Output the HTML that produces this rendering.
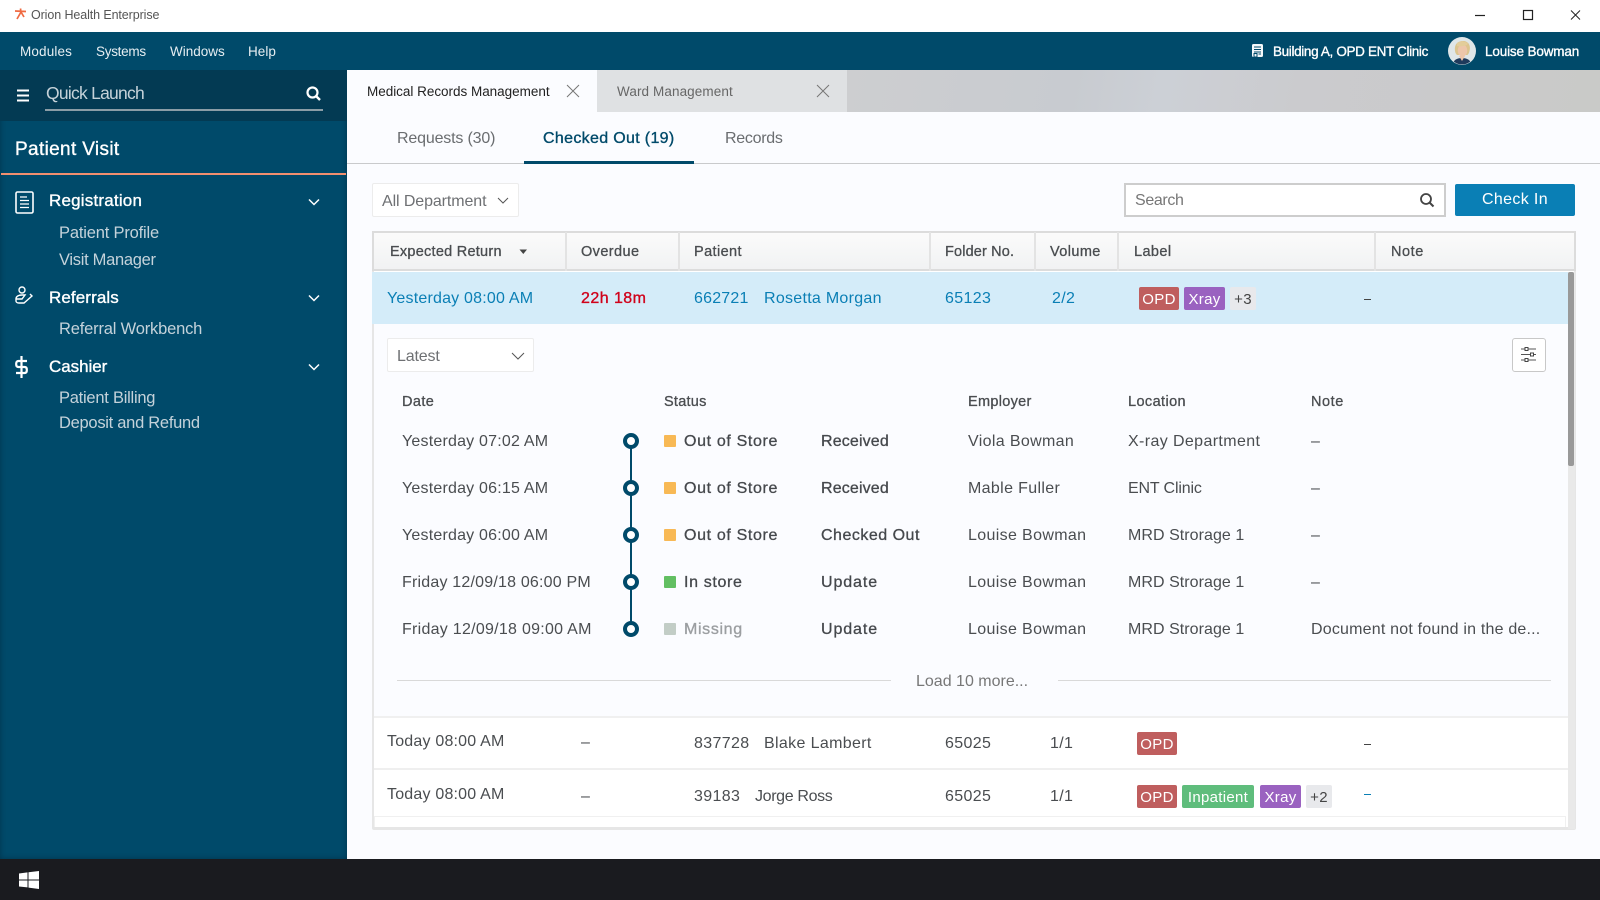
<!DOCTYPE html>
<html lang="en"><head><meta charset="utf-8"><title>Orion Health Enterprise</title>
<style>
*{box-sizing:border-box}
html,body{margin:0;padding:0;width:1600px;height:900px;overflow:hidden;background:#fbfcff;font-family:"Liberation Sans",sans-serif;color:#444}
.a{position:absolute}
.t{position:absolute;white-space:nowrap;line-height:20px;transform:translateY(calc(-50% + 2px));font-size:16px;letter-spacing:.2px;color:#4a4d50}
.s{-webkit-text-stroke:.35px currentColor}
.w{color:#fff}
.h{font-size:14.5px;letter-spacing:.4px;color:#4a4d50;-webkit-text-stroke:.3px #4a4d50}
.b{color:#0a7fb5}
.dk{color:#45484c;-webkit-text-stroke:.3px #45484c;letter-spacing:.65px}
.tag{position:absolute;height:23px;line-height:25px;border-radius:2px;color:#fff;font-size:15px;text-align:center;letter-spacing:.3px}
.sq{position:absolute;width:12px;height:12px;border-radius:1px;left:664px}
.dot{position:absolute;left:623px;width:16px;height:16px;border-radius:50%;border:4px solid #004a6a;background:#fff}
.sep{position:absolute;top:232px;height:39px;width:2px;background:#e3e3e3}
.sub{color:#c4d2da;font-size:16.5px;letter-spacing:-.18px}
.n{font-size:13.5px;color:#e6eef2}
</style></head><body>

<!-- title bar -->
<div class="a" style="left:0;top:0;width:1600px;height:32px;background:#fff"></div>
<svg class="a" style="left:14px;top:8px" width="14" height="12" viewBox="0 0 14 12"><path d="M6.500 0.500 L7 5 M1 3 L12 3.500 M7 4 L3 11 M7 4 L10 9" stroke="#ef6a42" stroke-width="1.700" fill="none"/></svg>
<div class="t" style="left:31px;top:13px;font-size:12.500px;letter-spacing:-.1px;color:#555">Orion Health Enterprise</div>
<svg class="a" style="left:1470px;top:5px" width="120" height="22" viewBox="0 0 120 22"><path d="M5 10.500H15" stroke="#222" stroke-width="1.200"/><rect x="53.500" y="5.500" width="9" height="9" fill="none" stroke="#222" stroke-width="1.200"/><path d="M101 5.500l9 9M110 5.500l-9 9" stroke="#222" stroke-width="1"/></svg>

<!-- nav -->
<div class="a" style="left:0;top:32px;width:1600px;height:38px;background:#004a6a"></div>
<div class="t n" style="left:20px;top:50px;letter-spacing:.15px">Modules</div>
<div class="t n" style="left:96px;top:50px;letter-spacing:-.28px">Systems</div>
<div class="t n" style="left:170px;top:50px;letter-spacing:0">Windows</div>
<div class="t n" style="left:248px;top:50px;letter-spacing:.05px">Help</div>
<svg class="a" style="left:1251px;top:43px" width="13" height="15" viewBox="0 0 13 15"><rect x="1" y="1" width="11" height="13" rx="1.500" fill="#f4f8fa"/><path d="M3 4H10M3 6.500H10M3 9H10M7.500 11H10M3 10.500H6V14H3z" stroke="#004a6a" stroke-width="1" fill="none"/></svg>
<div class="t s w" style="left:1273px;top:50px;font-size:13.500px;letter-spacing:-.35px">Building A, OPD ENT Clinic</div>
<svg class="a" style="left:1448px;top:37px" width="28" height="28" viewBox="0 0 28 28"><defs><clipPath id="c"><circle cx="14" cy="14" r="13.500"/></clipPath></defs><circle cx="14" cy="14" r="14" fill="#dfe6e8"/><g clip-path="url(#c)"><path d="M7 14C6 7 10 4 15 4s8 4 6.500 10c-.5 2-1 3-2 4H9C8 17 7.300 16 7 14z" fill="#dcc48e"/><ellipse cx="14.500" cy="13.500" rx="4.800" ry="6" fill="#edc6aa"/><path d="M9 9c3 1 7 0 10-1l1-2-6-2-5 2z" fill="#e3cd9a"/><path d="M5 28c0-5 4-7 9-7s9 2 9 7z" fill="#1f3a5c"/><path d="M11 19l3 5 3-5z" fill="#edc6aa"/></g></svg>
<div class="t s w" style="left:1485px;top:50px;font-size:13.500px;letter-spacing:-.15px">Louise Bowman</div>

<!-- sidebar -->
<div class="a" style="left:0;top:70px;width:347px;height:789px;background:#004a6a;box-shadow:inset 0 0 6px rgba(0,20,35,.4)"></div>
<div class="a" style="left:0;top:70px;width:347px;height:51px;background:#033a53"></div>
<svg class="a" style="left:16px;top:89px" width="14" height="13" viewBox="0 0 14 13"><path d="M1 1.500H13M1 6.500H13M1 11.500H13" stroke="#fff" stroke-width="2"/></svg>
<div class="t" style="left:46px;top:91px;font-size:17.500px;letter-spacing:-.75px;color:#c5d2d9">Quick Launch</div>
<svg class="a" style="left:305px;top:85px" width="17" height="17" viewBox="0 0 17 17"><circle cx="7.500" cy="7.500" r="5" fill="none" stroke="#fff" stroke-width="2.200"/><path d="M11 11l4 4" stroke="#fff" stroke-width="2.400"/></svg>
<div class="a" style="left:45px;top:109px;width:278px;height:2px;background:#8b9da6"></div>
<div class="t s w" style="left:15px;top:148px;font-size:19px;letter-spacing:.35px">Patient Visit</div>
<div class="a" style="left:1px;top:173px;width:345px;height:2px;background:#f08f6f"></div>

<svg class="a" style="left:15px;top:191px" width="19" height="23" viewBox="0 0 19 23"><rect x="1" y="1" width="17" height="21" rx="1.500" fill="none" stroke="#fff" stroke-width="1.600"/><path d="M5 6H12M5 9.500H14M5 13H14M5 16.500H14" stroke="#fff" stroke-width="1.300"/></svg>
<div class="t s w" style="left:49px;top:199px;font-size:17px;letter-spacing:.2px">Registration</div>
<div class="t sub" style="left:59px;top:231px">Patient Profile</div>
<div class="t sub" style="left:59px;top:258px;letter-spacing:-.3px">Visit Manager</div>
<svg class="a" style="left:15px;top:286px" width="19" height="21" viewBox="0 0 19 21"><circle cx="7" cy="4" r="3" fill="none" stroke="#fff" stroke-width="1.400"/><path d="M1 13c0-3 3-4 6-4h3l-3 4zM1 13v2c0 1 1 2 3 2h5l8-7-2-2" fill="none" stroke="#fff" stroke-width="1.400"/></svg>
<div class="t s w" style="left:49px;top:296px;font-size:17px;letter-spacing:.1px">Referrals</div>
<div class="t sub" style="left:59px;top:327px">Referral Workbench</div>
<svg class="a" style="left:15px;top:356px" width="13" height="22" viewBox="0 0 13 22"><path d="M6.500 0V22M12 5H3.500C2 5 1.200 6 1.200 7.500V8.500C1.200 10 2 11 3.500 11H9.500C11 11 11.800 12 11.800 13.500V14.500C11.800 16 11 17 9.500 17H1" stroke="#fff" stroke-width="2.200" fill="none"/></svg>
<div class="t s w" style="left:49px;top:365px;font-size:17px;letter-spacing:-.05px">Cashier</div>
<div class="t sub" style="left:59px;top:396px;letter-spacing:-.25px">Patient Billing</div>
<div class="t sub" style="left:59px;top:421px;letter-spacing:-.28px">Deposit and Refund</div>
<svg class="a" style="left:308px;top:198px" width="12" height="8" viewBox="0 0 12 8"><path d="M1 1.500l5 5 5-5" stroke="#fff" stroke-width="1.500" fill="none"/></svg>
<svg class="a" style="left:308px;top:294px" width="12" height="8" viewBox="0 0 12 8"><path d="M1 1.500l5 5 5-5" stroke="#fff" stroke-width="1.500" fill="none"/></svg>
<svg class="a" style="left:308px;top:363px" width="12" height="8" viewBox="0 0 12 8"><path d="M1 1.500l5 5 5-5" stroke="#fff" stroke-width="1.500" fill="none"/></svg>

<!-- tabs -->
<div class="a" style="left:847px;top:70px;width:753px;height:42px;background:linear-gradient(100deg,#cdced0,#c8cbd0 30%,#ccd0d6 42%,#cbcbce 60%,#cacaca 85%,#c9cac8)"></div>
<div class="a" style="left:347px;top:70px;width:250px;height:42px;background:#fbfcff"></div>
<div class="a" style="left:597px;top:70px;width:250px;height:42px;background:#dfe1e3"></div>
<div class="t" style="left:367px;top:90px;font-size:13.500px;letter-spacing:-.02px;color:#222">Medical Records Management</div>
<div class="t" style="left:617px;top:90px;font-size:13.500px;letter-spacing:.1px;color:#666">Ward Management</div>
<svg class="a" style="left:566px;top:84px" width="14" height="14" viewBox="0 0 14 14"><path d="M1 1l12 12M13 1L1 13" stroke="#777" stroke-width="1"/></svg>
<svg class="a" style="left:816px;top:84px" width="14" height="14" viewBox="0 0 14 14"><path d="M1 1l12 12M13 1L1 13" stroke="#777" stroke-width="1"/></svg>

<!-- sub tabs -->
<div class="a" style="left:347px;top:163px;width:1253px;height:1px;background:#c9cacc"></div>
<div class="t" style="left:397px;top:137px;font-size:16px;letter-spacing:-.17px;color:#6a6d70">Requests (30)</div>
<div class="t s" style="left:543px;top:137px;font-size:16px;letter-spacing:.33px;color:#004a6a">Checked Out (19)</div>
<div class="t" style="left:725px;top:137px;font-size:16px;letter-spacing:-.28px;color:#6a6d70">Records</div>
<div class="a" style="left:524px;top:161px;width:170px;height:3px;background:#004a6a"></div>

<!-- filter row -->
<div class="a" style="left:372px;top:183px;width:147px;height:34px;background:#fff;border:1px solid #ececec;border-radius:2px"></div>
<div class="t" style="left:382px;top:200px;letter-spacing:-.1px;color:#6e7073">All Department</div>
<svg class="a" style="left:497px;top:197px" width="12" height="8" viewBox="0 0 12 8"><path d="M1 1l5 5 5-5" stroke="#555" stroke-width="1" fill="none"/></svg>
<div class="a" style="left:1124px;top:183px;width:322px;height:34px;background:#fff;border:2px solid #cdcdcd"></div>
<div class="t" style="left:1135px;top:199px;letter-spacing:-.35px;color:#777">Search</div>
<svg class="a" style="left:1419px;top:192px" width="16" height="16" viewBox="0 0 16 16"><circle cx="7" cy="7" r="5" fill="none" stroke="#444" stroke-width="1.800"/><path d="M10.500 10.500l4 4" stroke="#444" stroke-width="2"/></svg>
<div class="a" style="left:1455px;top:184px;width:120px;height:32px;background:#0a7fb5;border-radius:2px"></div>
<div class="t w" style="left:1455px;width:120px;text-align:center;top:198px;letter-spacing:.35px">Check In</div>

<!-- table -->
<div class="a" style="left:372px;top:231px;width:1204px;height:599px;background:#fff;border:2px solid #e6e6e6;border-radius:2px"></div>
<div class="a" style="left:372px;top:231px;width:1204px;height:40px;background:linear-gradient(#fbfbfb,#f1f2f3);border:2px solid #dcdcdc"></div>
<div class="sep" style="left:565px"></div><div class="sep" style="left:678px"></div><div class="sep" style="left:929px"></div><div class="sep" style="left:1034px"></div><div class="sep" style="left:1117px"></div><div class="sep" style="left:1374px"></div>
<div class="t h" style="left:390px;top:250px;letter-spacing:.25px">Expected Return</div>
<svg class="a" style="left:519px;top:249px" width="9" height="6" viewBox="0 0 9 6"><path d="M0.500 0.500H8L4.300 5z" fill="#444"/></svg>
<div class="t h" style="left:581px;top:250px">Overdue</div>
<div class="t h" style="left:694px;top:250px">Patient</div>
<div class="t h" style="left:945px;top:250px;letter-spacing:.15px">Folder No.</div>
<div class="t h" style="left:1050px;top:250px">Volume</div>
<div class="t h" style="left:1134px;top:250px">Label</div>
<div class="t h" style="left:1391px;top:250px;letter-spacing:.55px">Note</div>

<!-- selected row -->
<div class="a" style="left:372px;top:272px;width:1196px;height:52px;background:#d4ecf9"></div>
<div class="t b" style="left:387px;top:297px">Yesterday 08:00 AM</div>
<div class="t s" style="left:581px;top:297px;letter-spacing:.45px;color:#d0021b">22h 18m</div>
<div class="t b" style="left:694px;top:297px;letter-spacing:.2px">662721</div>
<div class="t b" style="left:764px;top:297px;letter-spacing:.28px">Rosetta Morgan</div>
<div class="t b" style="left:945px;top:297px;letter-spacing:.35px">65123</div>
<div class="t b" style="left:1052px;top:297px;letter-spacing:.35px">2/2</div>
<div class="tag" style="left:1139px;top:287px;width:40px;background:#bf5e5e">OPD</div>
<div class="tag" style="left:1184px;top:287px;width:41px;background:#9a62c0">Xray</div>
<div class="tag" style="left:1230px;top:287px;width:26px;background:#e8e9ec;color:#444">+3</div>
<div class="a" style="left:1364px;top:299px;width:7px;height:1px;background:#444"></div>

<!-- expanded -->
<div class="a" style="left:374px;top:324px;width:1194px;height:392px;background:#fbfcff"></div>
<div class="a" style="left:387px;top:338px;width:147px;height:34px;background:#fff;border:1px solid #ececec;border-radius:2px"></div>
<div class="t" style="left:397px;top:355px;letter-spacing:-.15px;color:#6e7073">Latest</div>
<svg class="a" style="left:511px;top:352px" width="14" height="9" viewBox="0 0 14 9"><path d="M1 1l6 6 6-6" stroke="#555" stroke-width="1" fill="none"/></svg>
<div class="a" style="left:1512px;top:338px;width:34px;height:34px;background:#fff;border:1px solid #c8c8c8;border-radius:3px"></div>
<svg class="a" style="left:1520px;top:346px" width="18" height="18" viewBox="0 0 18 18"><path d="M1 3H16M1 8.500H16M1 14H16" stroke="#555" stroke-width="1"/><rect x="5" y="1.500" width="3" height="3" fill="#fff" stroke="#444"/><rect x="10.500" y="7" width="3" height="3" fill="#fff" stroke="#444"/><rect x="5" y="12.500" width="3" height="3" fill="#fff" stroke="#444"/></svg>

<div class="t h" style="left:402px;top:400px">Date</div>
<div class="t h" style="left:664px;top:400px;letter-spacing:.25px">Status</div>
<div class="t h" style="left:968px;top:400px;letter-spacing:.3px">Employer</div>
<div class="t h" style="left:1128px;top:400px">Location</div>
<div class="t h" style="left:1311px;top:400px;letter-spacing:.55px">Note</div>

<div class="a" style="left:630px;top:441px;width:2px;height:188px;background:#004a6a"></div>
<div class="dot" style="top:433px"></div><div class="dot" style="top:480px"></div><div class="dot" style="top:527px"></div><div class="dot" style="top:574px"></div><div class="dot" style="top:621px"></div>

<div class="sq" style="top:435px;background:#f8b955"></div>
<div class="sq" style="top:482px;background:#f8b955"></div>
<div class="sq" style="top:529px;background:#f8b955"></div>
<div class="sq" style="top:576px;background:#62bf62"></div>
<div class="sq" style="top:623px;background:#c2cdc6"></div>

<div class="t" style="left:402px;top:440px">Yesterday 07:02 AM</div>
<div class="t dk" style="left:684px;top:440px">Out of Store</div>
<div class="t dk" style="left:821px;top:440px;letter-spacing:.15px">Received</div>
<div class="t" style="left:968px;top:440px;letter-spacing:.35px">Viola Bowman</div>
<div class="t" style="left:1128px;top:440px;letter-spacing:.38px">X-ray Department</div>
<div class="t" style="left:1311px;top:440px">–</div>

<div class="t" style="left:402px;top:487px">Yesterday 06:15 AM</div>
<div class="t dk" style="left:684px;top:487px">Out of Store</div>
<div class="t dk" style="left:821px;top:487px;letter-spacing:.15px">Received</div>
<div class="t" style="left:968px;top:487px;letter-spacing:.35px">Mable Fuller</div>
<div class="t" style="left:1128px;top:487px;letter-spacing:-.15px">ENT Clinic</div>
<div class="t" style="left:1311px;top:487px">–</div>

<div class="t" style="left:402px;top:534px">Yesterday 06:00 AM</div>
<div class="t dk" style="left:684px;top:534px">Out of Store</div>
<div class="t dk" style="left:821px;top:534px;letter-spacing:.5px">Checked Out</div>
<div class="t" style="left:968px;top:534px;letter-spacing:.35px">Louise Bowman</div>
<div class="t" style="left:1128px;top:534px;letter-spacing:.05px">MRD Strorage 1</div>
<div class="t" style="left:1311px;top:534px">–</div>

<div class="t" style="left:402px;top:581px">Friday 12/09/18 06:00 PM</div>
<div class="t dk" style="left:684px;top:581px">In store</div>
<div class="t dk" style="left:821px;top:581px;letter-spacing:.9px">Update</div>
<div class="t" style="left:968px;top:581px;letter-spacing:.35px">Louise Bowman</div>
<div class="t" style="left:1128px;top:581px;letter-spacing:.05px">MRD Strorage 1</div>
<div class="t" style="left:1311px;top:581px">–</div>

<div class="t" style="left:402px;top:628px;letter-spacing:.27px">Friday 12/09/18 09:00 AM</div>
<div class="t s" style="left:684px;top:628px;color:#9b9ea1;letter-spacing:.65px">Missing</div>
<div class="t dk" style="left:821px;top:628px;letter-spacing:.9px">Update</div>
<div class="t" style="left:968px;top:628px;letter-spacing:.35px">Louise Bowman</div>
<div class="t" style="left:1128px;top:628px;letter-spacing:.05px">MRD Strorage 1</div>
<div class="t" style="left:1311px;top:628px">Document not found in the de...</div>

<div class="a" style="left:397px;top:680px;width:494px;height:1px;background:#d9d9d9"></div>
<div class="a" style="left:1058px;top:680px;width:493px;height:1px;background:#d9d9d9"></div>
<div class="t" style="left:916px;top:680px;letter-spacing:0;color:#777">Load 10 more...</div>

<!-- rows -->
<div class="a" style="left:374px;top:716px;width:1194px;height:2px;background:#f0f0f0"></div>
<div class="t" style="left:387px;top:740px">Today 08:00 AM</div>
<div class="t" style="left:581px;top:741px">–</div>
<div class="t" style="left:694px;top:742px;letter-spacing:.35px">837728</div>
<div class="t" style="left:764px;top:742px;letter-spacing:.35px">Blake Lambert</div>
<div class="t" style="left:945px;top:742px;letter-spacing:.35px">65025</div>
<div class="t" style="left:1050px;top:742px;letter-spacing:.35px">1/1</div>
<div class="tag" style="left:1137px;top:732px;width:40px;background:#bf5e5e">OPD</div>
<div class="a" style="left:1364px;top:744px;width:7px;height:1px;background:#444"></div>

<div class="a" style="left:374px;top:768px;width:1194px;height:2px;background:#efefef"></div>
<div class="t" style="left:387px;top:793px">Today 08:00 AM</div>
<div class="t" style="left:581px;top:795px">–</div>
<div class="t" style="left:694px;top:795px;letter-spacing:.35px">39183</div>
<div class="t" style="left:755px;top:795px;letter-spacing:-.35px">Jorge Ross</div>
<div class="t" style="left:945px;top:795px;letter-spacing:.35px">65025</div>
<div class="t" style="left:1050px;top:795px;letter-spacing:.35px">1/1</div>
<div class="tag" style="left:1137px;top:785px;width:40px;background:#bf5e5e">OPD</div>
<div class="tag" style="left:1182px;top:785px;width:72px;background:#5fbd7c">Inpatient</div>
<div class="tag" style="left:1260px;top:785px;width:41px;background:#9a62c0">Xray</div>
<div class="tag" style="left:1306px;top:785px;width:26px;background:#e8e9ec;color:#444">+2</div>
<div class="a" style="left:1364px;top:794px;width:7px;height:1px;background:#0a7fb5"></div>

<!-- scrollbars -->
<div class="a" style="left:374px;top:816px;width:1192px;height:12px;background:#fff;border:1px solid #f0f0f0;border-bottom:0"></div>
<div class="a" style="left:374px;top:827px;width:1201px;height:2px;background:#e6e6e6"></div>
<div class="a" style="left:1568px;top:272px;width:7px;height:557px;background:#e9e9e9"></div>
<div class="a" style="left:1568px;top:272px;width:6px;height:194px;background:#999;border-radius:2px"></div>

<!-- taskbar -->
<div class="a" style="left:0;top:859px;width:1600px;height:41px;background:#1a1b1f"></div>
<svg class="a" style="left:19px;top:871px" width="20" height="18" viewBox="0 0 20 18"><path d="M0 2.500L8.500 1.400V8.500H0zM9.500 1.200L20 0V8.500H9.500zM0 9.500H8.500V16.400L0 15.500zM9.500 9.500H20V18L9.500 16.600z" fill="#fff"/></svg>
</body></html>
